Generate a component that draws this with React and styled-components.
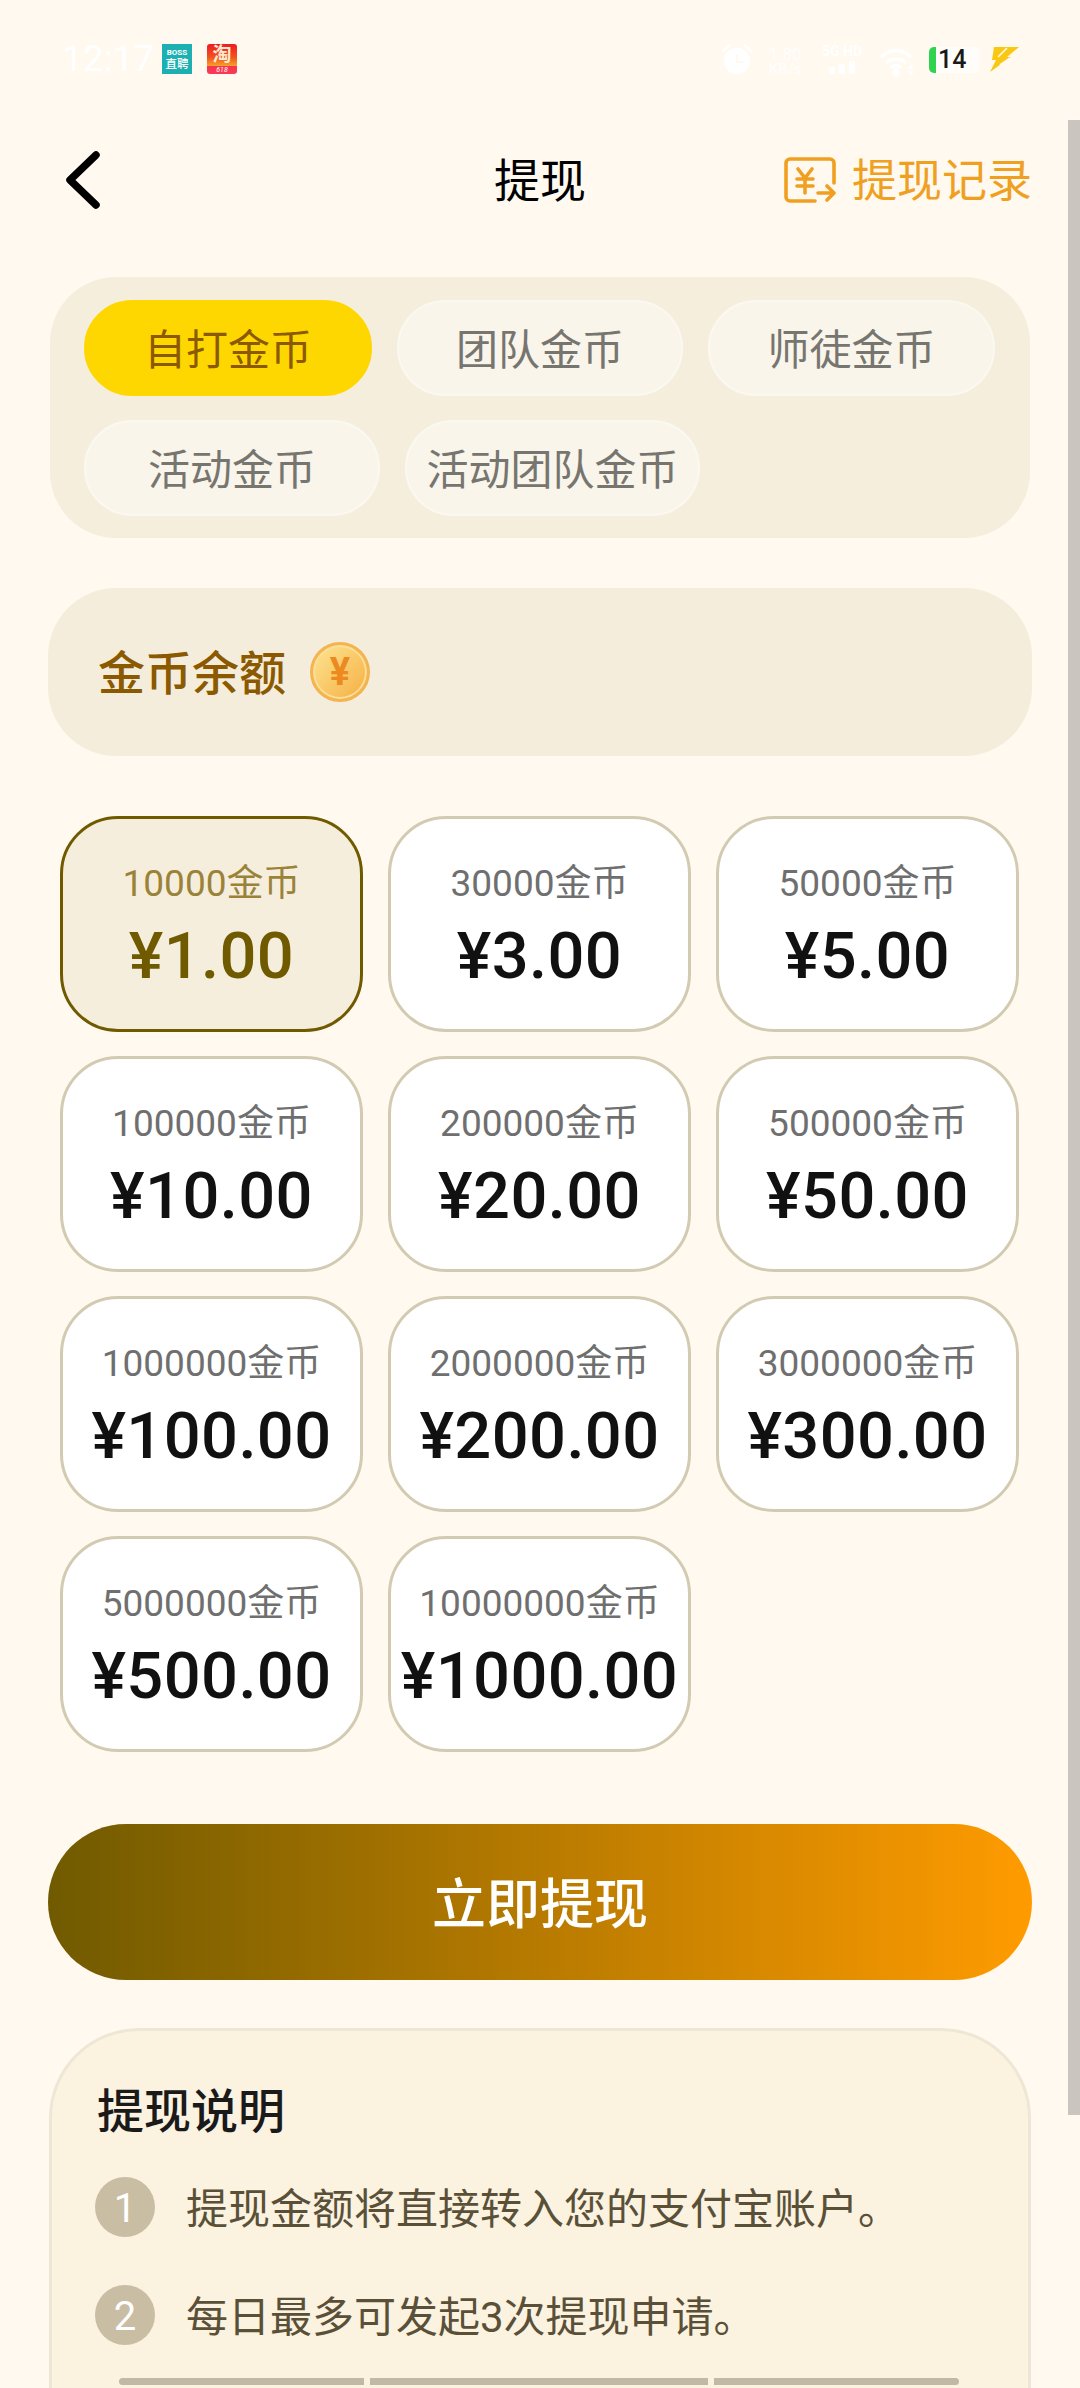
import React from 'react';
import styled, { createGlobalStyle } from 'styled-components';

const Global = createGlobalStyle`
  html, body { margin: 0; padding: 0; background: #fff9f0; }
  * { box-sizing: border-box; }
  body { font-family: Roboto, "Noto Sans CJK SC", "Noto Sans", sans-serif; }
`;

const Page = styled.div`
  position: relative;
  width: 1080px;
  height: 2388px;
  overflow: hidden;
  background: #fff9f0;
`;

const ScrollThumb = styled.div`
  position: absolute;
  top: 120px;
  right: 0;
  width: 12px;
  height: 1995px;
  background: #cac6bf;
`;

const StatusBar = styled.div`
  height: 120px;
  padding: 44px 60px 0 62px;
  display: flex;
  justify-content: space-between;
  align-items: flex-start;
`;

const StatusLeft = styled.div`
  display: flex;
  align-items: center;
  height: 30px;
`;

const Time = styled.span`
  width: 100px;
  font-size: 37px;
  line-height: 30px;
  color: #fff;
  white-space: nowrap;
`;

const BossIcon = styled.div`
  width: 30px;
  height: 30px;
  background: #1db0b2;
  color: #fff;
  display: flex;
  flex-direction: column;
  align-items: center;
  justify-content: center;
  font-size: 8px;
  line-height: 10px;
  font-weight: 700;
  white-space: nowrap;
  overflow: hidden;
`;

const BossCjk = styled.span`
  font-size: 11.5px;
  line-height: 12px;
  font-weight: 500;
`;

const TaoIcon = styled.div`
  width: 30px;
  height: 30px;
  margin-left: 15px;
  border-radius: 3px;
  overflow: hidden;
  background: linear-gradient(180deg, #ec1c24 0%, #f2541f 45%, #f4a028 72%, #f8344e 74%, #f83a58 100%);
  color: #ffe9cf;
  display: flex;
  flex-direction: column;
  align-items: center;
`;

const TaoGlyph = styled.span`
  font-size: 19px;
  line-height: 22px;
  font-weight: 700;
`;

const TaoTag = styled.span`
  font-size: 7px;
  line-height: 8px;
  font-style: italic;
  color: #fff;
`;

const StatusRight = styled.div`
  display: flex;
  align-items: flex-start;
  height: 32px;
`;

const SpeedBox = styled.div`
  width: 36px;
  margin-left: 15px;
  margin-top: 2px;
  color: #fff;
  font-size: 15px;
  line-height: 14px;
  text-align: center;
  white-space: nowrap;
  opacity: 0.95;
`;

const SpeedValue = styled.div`
  font-size: 17px;
  line-height: 16px;
`;

const SignalBox = styled.div`
  width: 50px;
  margin-left: 14px;
  display: flex;
  flex-direction: column;
  align-items: center;
  color: #fff;
  font-size: 14px;
  line-height: 15px;
  font-weight: 700;
  white-space: nowrap;
`;

const Battery = styled.div`
  width: 50px;
  height: 26px;
  margin-left: 13px;
  margin-top: 3px;
  border-radius: 5px;
  background: #fffdf9;
  border-left: 7px solid #2ed350;
  color: #1a1a1a;
  font-size: 25px;
  line-height: 26px;
  font-weight: 500;
  padding-left: 2px;
`;

const Header = styled.header`
  height: 120px;
  padding: 0 48px;
  display: grid;
  grid-template-columns: 1fr auto 1fr;
  align-items: center;
`;

const BackIcon = styled.svg`
  width: 36px;
  height: 58px;
  margin-left: 17px;
  display: block;
`;

const Title = styled.h1`
  margin: 0;
  padding-top: 2px;
  font-size: 46px;
  line-height: 60px;
  font-weight: 400;
  color: #000;
`;

const RecordLink = styled.div`
  display: flex;
  justify-content: flex-end;
  align-items: center;
  gap: 16px;
  color: #f0a020;
  font-size: 45px;
  line-height: 60px;
`;

const RecordText = styled.span`
  padding-top: 4px;
`;

const Body = styled.main`
  padding: 37px 48px 0;
`;

const TabsPanel = styled.div`
  margin: 0 2px;
  padding: 23px 34px 22px;
  height: 261px;
  border-radius: 66px;
  background: #f5eedd;
  display: flex;
  flex-wrap: wrap;
  align-content: flex-start;
  gap: 24px 25px;
`;

const Tab = styled.div`
  width: ${p => p.$w}px;
  height: 96px;
  padding-bottom: 4px;
  border-radius: 48px;
  display: flex;
  align-items: center;
  justify-content: center;
  white-space: nowrap;
  font-size: 42px;
  color: ${p => (p.$active ? '#8b5a00' : '#777570')};
  background: ${p => (p.$active ? '#ffd700' : '#f9f5ea')};
  border: 2px solid ${p => (p.$active ? '#ffd700' : '#fbf8f1')};
`;

const BalanceCard = styled.div`
  margin-top: 50px;
  height: 168px;
  padding: 0 50px;
  border-radius: 68px;
  background: #f5eddc;
  display: flex;
  align-items: center;
  gap: 24px;
`;

const BalanceLabel = styled.span`
  padding-bottom: 5px;
  font-size: 47px;
  font-weight: 500;
  color: #8b5a00;
`;

const Coin = styled.div`
  width: 60px;
  height: 60px;
  border-radius: 50%;
  border: 3px solid #f3b451;
  box-shadow: inset 0 0 0 2px #fbdf97;
  background: linear-gradient(135deg, #fde592 0%, #f9c766 55%, #f5ae42 100%);
  color: #ec8a20;
  font-size: 38px;
  font-weight: 700;
  line-height: 54px;
  text-align: center;
`;

const AmountGrid = styled.div`
  margin: 60px 12px 0;
  display: grid;
  grid-template-columns: repeat(3, 303px);
  grid-auto-rows: 216px;
  gap: 24px 25px;
`;

const AmountCard = styled.div`
  padding-top: 3px;
  border-radius: 58px;
  border: 3px solid ${p => (p.$active ? '#705a00' : '#d3cab2')};
  background: ${p => (p.$active ? '#f6eedd' : '#fff')};
  display: flex;
  flex-direction: column;
  align-items: center;
  justify-content: center;
  gap: 12px;
  white-space: nowrap;
`;

const Coins = styled.div`
  font-size: 37px;
  line-height: 48px;
  color: ${p => (p.$active ? '#9a8339' : '#6f6f6f')};
`;

const Price = styled.div`
  font-size: 65px;
  line-height: 72px;
  font-weight: 500;
  letter-spacing: 0.4px;
  color: ${p => (p.$active ? '#705a00' : '#111')};
`;

const Submit = styled.div`
  margin-top: 72px;
  height: 156px;
  padding-bottom: 3px;
  border-radius: 78px;
  background: linear-gradient(90deg, #705a00 0%, #ff9b00 100%);
  color: #fff;
  font-size: 54px;
  font-weight: 500;
  display: flex;
  align-items: center;
  justify-content: center;
`;

const NoteCard = styled.section`
  margin: 48px 1px 0;
  height: 400px;
  padding: 51px 43px 0;
  border: 3px solid #efe7d5;
  border-radius: 90px 90px 0 0;
  background: #fbf2e0;
`;

const NoteTitle = styled.h2`
  margin: 0 0 35px;
  font-size: 47px;
  line-height: 60px;
  font-weight: 500;
  color: #1a1a1a;
  padding-left: 2px;
`;

const NoteList = styled.div`
  display: flex;
  flex-direction: column;
  gap: 48px;
`;

const NoteRow = styled.div`
  display: flex;
  align-items: center;
  gap: 31px;
  height: 60px;
`;

const NoteNum = styled.span`
  width: 60px;
  height: 60px;
  border-radius: 50%;
  background: #c9bda3;
  color: #fff;
  font-size: 40px;
  line-height: 64px;
  text-align: center;
`;

const NoteText = styled.span`
  padding-bottom: 4px;
  font-size: 42px;
  color: #5a5038;
  white-space: nowrap;
`;

const Clipped = styled.div`
  margin: 33px 0 0 24px;
  display: flex;
  gap: 6px;
  height: 7px;
`;

const ClippedBar = styled.div`
  width: ${p => p.$w}px;
  background: #c2b8a6;
  border-radius: ${p => p.$r};
`;

const tabs = [
  ['自打金币', 288, true],
  ['团队金币', 286],
  ['师徒金币', 287],
  ['活动金币', 296],
  ['活动团队金币', 295],
];

const amounts = [
  ['10000金币', '¥1.00', true],
  ['30000金币', '¥3.00'],
  ['50000金币', '¥5.00'],
  ['100000金币', '¥10.00'],
  ['200000金币', '¥20.00'],
  ['500000金币', '¥50.00'],
  ['1000000金币', '¥100.00'],
  ['2000000金币', '¥200.00'],
  ['3000000金币', '¥300.00'],
  ['5000000金币', '¥500.00'],
  ['10000000金币', '¥1000.00'],
];

const AlarmIcon = () => (
  <svg width="30" height="30" viewBox="0 0 30 30" fill="#fff" style={{ display: 'block' }}>
    <circle cx="15" cy="17" r="13" />
    <path d="M1 7 L7 1.5 M29 7 L23 1.5" stroke="#fff" strokeWidth="2.5" strokeLinecap="round" />
    <path d="M15 10 V18 H21" fill="none" stroke="#fff9f0" strokeWidth="2" />
  </svg>
);

const SignalBars = () => (
  <svg width="26" height="13" viewBox="0 0 26 13" fill="#fff" style={{ display: 'block', marginTop: 2 }}>
    <rect x="0" y="6" width="6" height="7" rx="1" />
    <rect x="10" y="3" width="6" height="10" rx="1" />
    <rect x="20" y="0" width="6" height="13" rx="1" />
  </svg>
);

const WifiIcon = () => (
  <svg width="36" height="28" viewBox="0 0 36 28" fill="none" stroke="#fff" strokeWidth="3.4" strokeLinecap="round" style={{ display: 'block', marginLeft: 13, marginTop: 4 }}>
    <path d="M2 8 C10 1 22 1 30 8" />
    <path d="M7 14 C12 10 20 10 25 14" />
    <path d="M12 19 C14.5 17.5 17.5 17.5 20 19" />
    <circle cx="16" cy="24.5" r="2" fill="#fff" />
    <path d="M31 17 L34 21 H28 Z M31 27 L34 23.5 H28 Z" fill="#fff" strokeWidth="0.5" />
  </svg>
);

const BoltIcon = () => (
  <svg width="30" height="26" viewBox="0 0 30 26" style={{ display: 'block', marginLeft: 11, marginTop: 3 }}>
    <path d="M4 0 H29 L17 10 H21 L0 25 L6 13 H2 Z" fill="#fac810" />
    <path d="M17 1 L8 10 M20 11 L10 18" stroke="#fff9f0" strokeWidth="1.6" fill="none" />
  </svg>
);

const BackChevron = () => (
  <BackIcon viewBox="0 0 36 58" fill="none" stroke="#000" strokeWidth="7.5" strokeLinecap="round" strokeLinejoin="round">
    <path d="M31 4 L5 29 L31 54" />
  </BackIcon>
);

const RecordIcon = () => (
  <svg width="52" height="46" viewBox="0 0 52 46" fill="none" stroke="#f0a020" strokeWidth="3.6" strokeLinecap="round" strokeLinejoin="round" style={{ display: 'block' }}>
    <path d="M31 44 H6 a4 4 0 0 1 -4 -4 V6 a4 4 0 0 1 4 -4 H46 a4 4 0 0 1 4 4 V26" />
    <path d="M14 12 L21 21 L28 12 M13 22 H29 M13 29 H29 M21 21 V36" />
    <path d="M34 36 H50 M43 29 L50 36 L43 43" />
  </svg>
);

export default function App() {
  return (
    <Page>
      <Global />
      <StatusBar>
        <StatusLeft>
          <Time>12:17</Time>
          <BossIcon>
            BOSS
            <BossCjk>直聘</BossCjk>
          </BossIcon>
          <TaoIcon>
            <TaoGlyph>淘</TaoGlyph>
            <TaoTag>618</TaoTag>
          </TaoIcon>
        </StatusLeft>
        <StatusRight>
          <AlarmIcon />
          <SpeedBox>
            <SpeedValue>1.80</SpeedValue>
            KB/s
          </SpeedBox>
          <SignalBox>
            5G HD
            <SignalBars />
          </SignalBox>
          <WifiIcon />
          <Battery>14</Battery>
          <BoltIcon />
        </StatusRight>
      </StatusBar>
      <Header>
        <BackChevron />
        <Title>提现</Title>
        <RecordLink>
          <RecordIcon />
          <RecordText>提现记录</RecordText>
        </RecordLink>
      </Header>
      <Body>
        <TabsPanel>
          {tabs.map(([t, w, a]) => (
            <Tab key={t} $w={w} $active={a}>{t}</Tab>
          ))}
        </TabsPanel>
        <BalanceCard>
          <BalanceLabel>金币余额</BalanceLabel>
          <Coin>¥</Coin>
        </BalanceCard>
        <AmountGrid>
          {amounts.map(([c, p, a]) => (
            <AmountCard key={c} $active={a}>
              <Coins $active={a}>{c}</Coins>
              <Price $active={a}>{p}</Price>
            </AmountCard>
          ))}
        </AmountGrid>
        <Submit>立即提现</Submit>
        <NoteCard>
          <NoteTitle>提现说明</NoteTitle>
          <NoteList>
            <NoteRow>
              <NoteNum>1</NoteNum>
              <NoteText>提现金额将直接转入您的支付宝账户。</NoteText>
            </NoteRow>
            <NoteRow>
              <NoteNum>2</NoteNum>
              <NoteText>每日最多可发起3次提现申请。</NoteText>
            </NoteRow>
          </NoteList>
          <Clipped>
            <ClippedBar $w={245} $r="4px 0 0 4px" />
            <ClippedBar $w={338} $r="0" />
            <ClippedBar $w={245} $r="0 4px 4px 0" />
          </Clipped>
        </NoteCard>
      </Body>
      <ScrollThumb />
    </Page>
  );
}
